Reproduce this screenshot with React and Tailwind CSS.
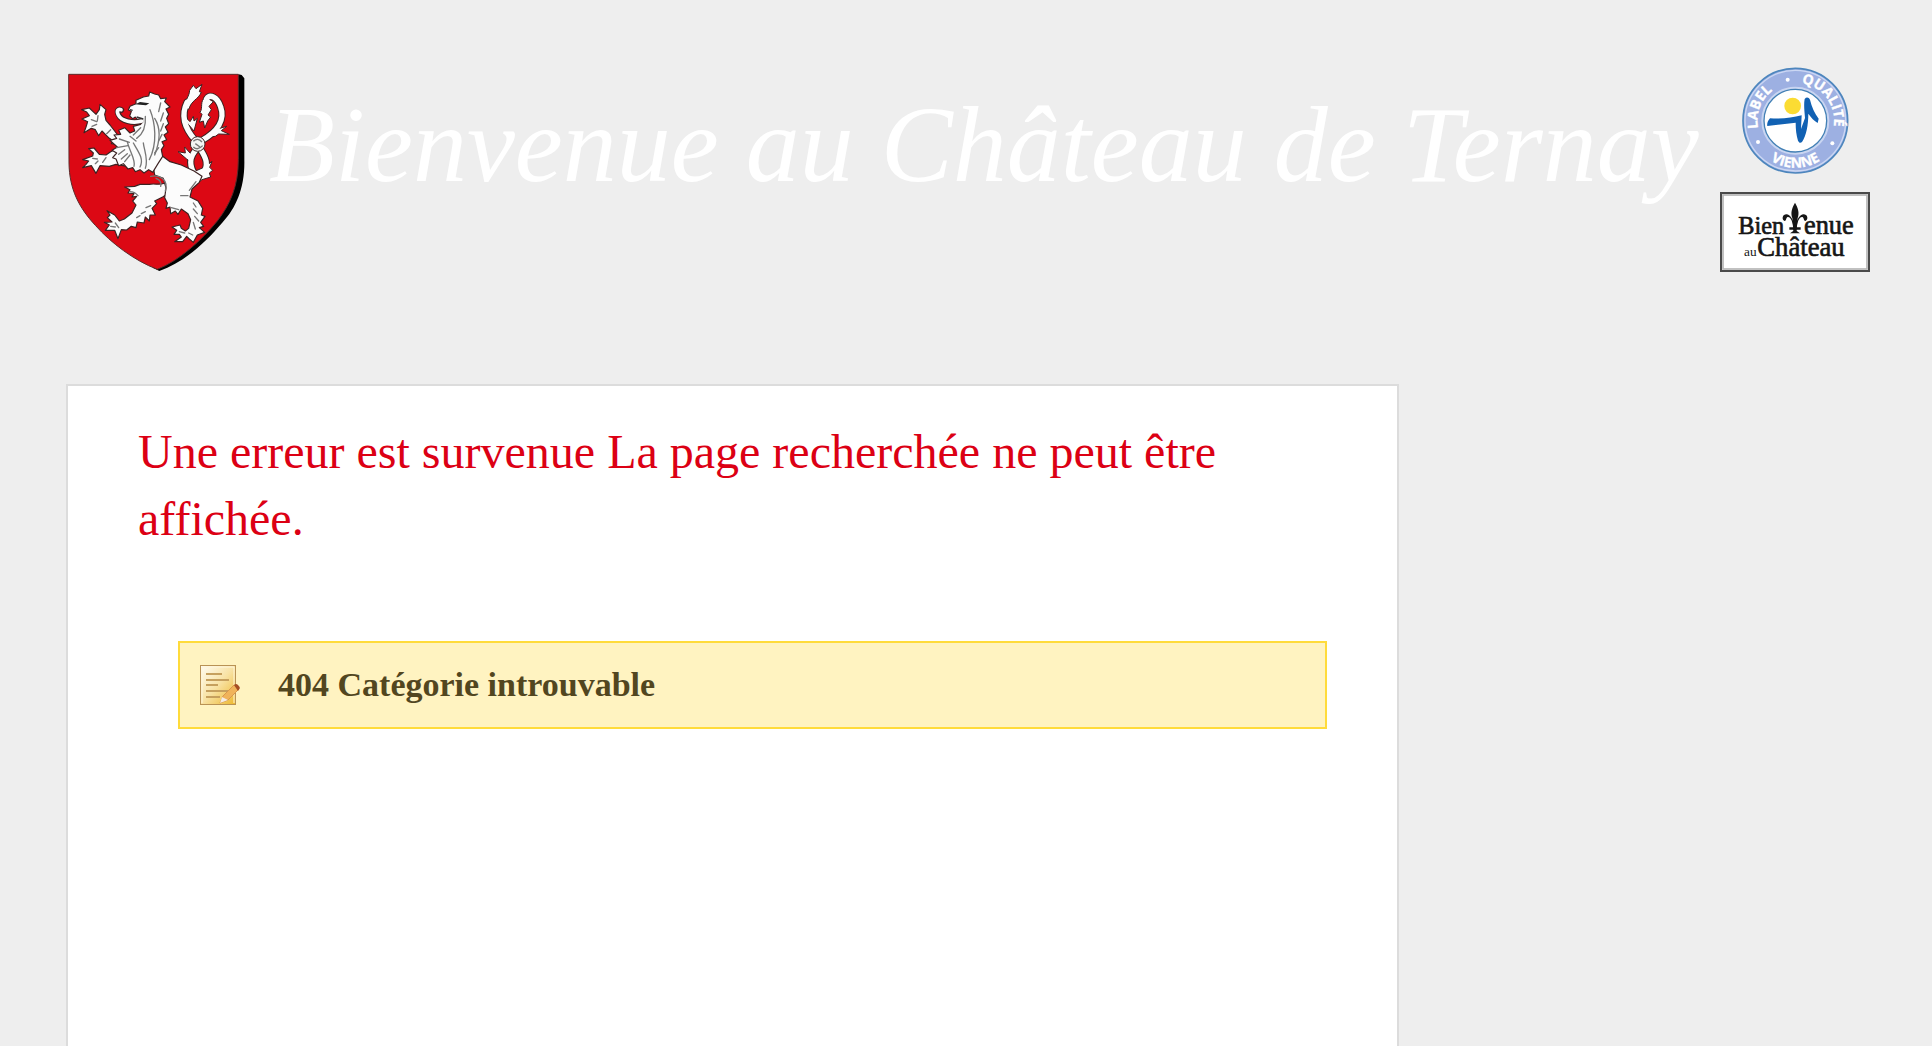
// Shield with the white lion
function CoatOfArms() {
    return (
        <svg viewBox="36 40 531 597" className="w-[177px] h-[199px] shrink-0" role="img" aria-label="Blason">
            <path d="M548 44L557 46L565 56V300C567 385 540 445 500 488C452 545 385 608 310 634L290 624Z" fill="#000" />
            <path
                d="M38 44H547V300C547 380 522 435 484 484C438 540 372 602 304 629C235 603 165 550 118 497C70 445 40 390 39 310Z"
                fill="#dc0814"
                stroke="#5b2a2a"
                strokeWidth="3"
            />
            {/* Tail */}
            <g fill="none" strokeLinecap="round" stroke="#3c2222" strokeWidth="22">
                <path d="M420 348C395 315 402 290 422 268M440 345C460 315 450 295 434 270" />
                <path d="M418 242C385 205 375 165 393 128M438 242C485 215 508 180 494 142C484 112 462 102 452 117" />
            </g>
            <g fill="#fcfcfc" stroke="#3c2222" strokeWidth="3" strokeLinejoin="round">
                <path d="M383 150C384 124 400 112 401 92L412 77L420 87L438 74L430 96L436 98C426 120 406 122 399 148Z" />
                <path d="M448 112C430 125 442 145 432 158L438 164L430 188L442 184L446 205L455 184L464 172L456 166L466 150L459 140L472 126Z" />
                <path d="M392 188L390 174L402 186L412 170L414 184L424 176L414 214Z" />
                <path d="M470 212L492 192L488 207L512 200L496 213L520 224L488 223L478 230L458 232Z" />
                <path d="M408 310L392 298L366 276L388 280L386 262L402 280L412 290Z" />
                <path d="M446 322L468 305L461 323L470 332L460 340L464 352L438 360L415 378L405 340Z" />
            </g>
            <g fill="none" stroke="#fcfcfc" strokeWidth="16" strokeLinecap="round">
                <path d="M420 350C395 315 402 290 422 268M440 345C460 315 450 295 434 270" />
                <path d="M418 242C385 205 375 165 393 128M438 242C485 215 508 180 494 142C484 112 462 102 452 117" />
            </g>
            <circle cx="425" cy="253" r="22" fill="#f4f4f4" stroke="#3c2222" strokeWidth="3" />
            <path d="M412 245Q425 232 438 247M412 262Q425 274 440 258M418 252L432 262" fill="none" stroke="#777" strokeWidth="4" />
            {/* Legs, body and head */}
            <g fill="#fcfcfc" stroke="#3c2222" strokeWidth="3.5" strokeLinejoin="round">
                <path d="M334 366C318 380 300 370 280 374L252 374L236 380L206 382L222 390L216 400L234 402L228 412L242 410L230 424L240 436L228 460L205 478L190 484L176 466L153 453L162 466L154 474L168 487L145 488L160 496L148 512L176 512L186 537L196 510L212 511L226 500L240 504L244 487L264 490L268 472L280 484L282 466L298 466L288 446L302 432L296 424L320 412L345 396Z" />
                <path d="M182 268L164 276L150 286L130 284L114 265L98 267L112 280L110 289L80 300L98 304L90 314L80 324L106 318L120 341L132 318L160 320L180 314L214 320L230 270Z" />
                <path d="M194 238L176 214L162 196L150 182L146 164L150 150L132 134L130 150L120 164L100 145L77 150L92 157L100 168L78 178L95 186L90 202L84 219L106 206L118 210L128 228L138 214L148 224L160 236L172 244L166 252L192 254Z" />
                <path d="M330 385L326 414L334 430L330 446L342 442L344 462L358 454L366 464L376 448L396 462L404 480L398 506L388 514L376 506L372 496L348 502L362 512L354 524L370 524L376 532L356 546L380 546L392 530L400 538L412 548L424 526L446 518L430 504L443 500L434 488L447 470L436 466L440 446L426 424L402 412L408 388L430 368L438 350L414 334L376 316L342 306L318 288L290 310L296 346L322 356Z" />
                <path d="M240 122L262 112L278 109L281 97L296 103L308 106L314 117L331 115L326 126L342 142L330 148L338 164L332 176L338 192L328 202L336 218L324 226L332 240L318 246L324 258L316 270L320 290L306 312L290 338L278 330L264 340L252 330L238 336L230 324L216 328L202 312L188 318L180 298L170 294L182 280L168 272L184 262L162 242L182 236L174 226L194 224L188 212L206 204L222 220L236 214L232 200L254 194L258 184L246 182L238 172L230 177L221 169L226 155L217 151L222 140L240 132Z" />
            </g>
            {/* Tongue */}
            <path d="M254 184C230 192 196 184 188 166C180 152 188 147 196 151" fill="none" stroke="#3c2222" strokeWidth="17" strokeLinecap="round" />
            <path d="M258 184C230 192 196 184 187 166C180 152 188 147 195 150" fill="none" stroke="#fcfcfc" strokeWidth="11" strokeLinecap="round" />
            {/* Fur and claws */}
            <g fill="none" stroke="#777" strokeWidth="4" strokeLinecap="round">
                <path d="M282 150C298 190 305 250 280 300M268 170C270 198 262 222 242 236M296 176C318 210 310 250 296 286" />
                <path d="M214 246C220 275 240 300 234 320M232 250C250 280 264 300 252 322M262 250C264 270 278 300 268 326" />
                <path d="M190 238L220 248M182 264L216 258M188 284L206 270M196 298L214 282M206 306L222 286M222 230L240 244" />
                <path d="M314 130L308 156M322 160L314 184M322 192L314 214M318 224L308 244M308 264L296 280M254 204L232 226" />
                <path d="M284 350C312 344 338 360 328 394M300 356Q318 362 314 380M246 408Q236 396 222 396" />
                <path d="M374 408H396M346 444L368 450M420 442L412 430M424 462L412 448M428 484L416 470M418 508L412 488" />
                <path d="M106 180L122 186M108 200L122 194M126 168L124 184M110 296L124 298M118 312L126 304M178 490L188 504M164 500L178 502M370 516L386 520M398 520L410 526" />
                <path d="M164 210L152 222M150 294L140 308M256 462L268 456M270 444L284 438M242 474L252 468M420 366L400 392" />
            </g>
            <path d="M238 134L252 127L280 131L270 137L252 135Z" fill="#222" />
            <path d="M222 150L230 152M242 172L262 178" stroke="#333" strokeWidth="4" />
        </svg>
    );
}

function LabelQualite() {
    return (
        <svg viewBox="125 52 321 321" className="w-[107px] h-[107px]" role="img" aria-label="Label Qualité Vienne">
            <defs>
                <path id="ring-label" d="M174 236A113 113 0 0 1 285 100A113 113 0 0 1 398 213" />
                <path id="ring-qualite" d="M303 101A113 113 0 0 1 285 326" />
                <path id="ring-vienne" d="M144 213A141 141 0 0 0 426 213" />
            </defs>
            <circle cx="285" cy="213" r="157" fill="#9db0e2" stroke="#4d86bd" strokeWidth="5" />
            <circle cx="285" cy="213" r="151" fill="none" stroke="#cbd7f3" strokeWidth="4" />
            <circle cx="285" cy="213" r="98" fill="#fff" stroke="#c9d5f1" strokeWidth="8" />
            <circle cx="285" cy="213" r="94" fill="#fff" stroke="#4380b5" strokeWidth="4" />
            <g fill="#fff" stroke="#fff" strokeWidth="1" fontFamily="'Open Sans', sans-serif" fontWeight="700" fontSize="42">
                <text><textPath href="#ring-label">LABEL</textPath></text>
                <text><textPath href="#ring-qualite">QUALITÉ</textPath></text>
                <text textAnchor="middle"><textPath href="#ring-vienne" startOffset="50%">VIENNE</textPath></text>
            </g>
            <g fill="#fff">
                <circle cx="262" cy="90" r="6" />
                <circle cx="173" cy="277" r="6" />
                <circle cx="396" cy="281" r="6" />
            </g>
            <circle cx="277" cy="169" r="25" fill="#fbdc33" />
            <path
                d="M209 206C245 208 275 205 304 197L302 238L314 205C312 180 310 165 313 148C318 142 325 142 329 150C334 172 343 190 355 207L352 220C342 214 332 204 324 192C324 225 318 258 305 277C300 281 296 279 293 273C288 255 286 240 286 219C258 222 228 226 201 229C199 222 203 213 209 206Z"
                fill="#1161b3"
            />
        </svg>
    );
}

function BienvenueChateau() {
    return (
        <svg viewBox="60 425 450 240" className="w-[150px] h-[80px]" role="img" aria-label="Bienvenue au Château">
            <rect x="63" y="428" width="444" height="234" fill="#fff" stroke="#4a4a4a" strokeWidth="6" />
            <rect x="69" y="434" width="432" height="222" fill="none" stroke="#b5b5b5" strokeWidth="5" />
            <g fill="#161616" stroke="#161616" strokeWidth="2" fontFamily="'Liberation Serif', serif">
                <text x="115" y="551" fontSize="73">Bien</text>
                <text x="312" y="551" fontSize="79">enue</text>
                <text x="172" y="617" fontSize="80">Château</text>
                <text x="132" y="617" fontSize="40" strokeWidth="0">au</text>
            </g>
            {/* Fleur-de-lis standing in for the V */}
            <g fill="#161616">
                <path d="M285 457C294 472 299 488 293 503L289 542H281L277 503C271 488 276 472 285 457Z" />
                <path d="M281 545C279 515 273 499 263 500C258 501 260 510 254 512C247 510 246 501 251 495C265 484 280 503 285 533C290 503 305 484 319 495C324 501 323 510 316 512C310 510 312 501 307 500C297 499 291 515 289 545Z" />
                <path d="M268 531H302V538H268ZM270 549L285 538L300 549Z" />
            </g>
        </svg>
    );
}

function NoteIcon() {
    return (
        <svg viewBox="0 0 40 40" className="w-10 h-10 shrink-0" aria-hidden="true">
            <defs>
                <linearGradient id="paper" x1="0" y1="0" x2="1" y2="1">
                    <stop offset="0" stopColor="#fffdf5" />
                    <stop offset="0.5" stopColor="#f8e2a4" />
                    <stop offset="1" stopColor="#edb72c" />
                </linearGradient>
            </defs>
            <rect x="0.5" y="0.5" width="35" height="39" fill="url(#paper)" stroke="#b99255" />
            <path d="M2 38V2H34V38" fill="none" stroke="#fff5d9" />
            <path d="M6 9H22M6 15H29M6 20H18M6 26H29M6 32H20" stroke="#c6a05e" strokeWidth="2" />
            <path d="M20 38L23 31L34 20L39 24L28 35Z" fill="#f0b35a" stroke="#d9974d" />
            <path d="M34 20Q37 17 40 23L38 26Z" fill="#a54e24" />
            <path d="M20 38L22 32L28 35Z" fill="#f5ece2" />
        </svg>
    );
}

export default function App() {
    return (
        <div className="min-h-screen flex flex-col bg-[#eeeeee]">
            {/* Header */}
            <header className="flex items-start justify-between pl-[68px] pr-[62px] pt-[67px] pb-28">
                <div className="flex items-start gap-6 pt-[6px]">
                    <CoatOfArms />
                    <h1 className="whitespace-nowrap font-['Gabriola','Liberation_Serif',serif] italic text-[108px] leading-[144px] text-white">
                        Bienvenue au Château de Ternay
                    </h1>
                </div>
                <div className="flex flex-col items-center gap-[18px]">
                    <LabelQualite />
                    <BienvenueChateau />
                </div>
            </header>

            {/* Content */}
            <main className="flex-1 w-[69%] ml-[66px] px-[70px] pt-8 bg-white border-2 border-b-0 border-[#dcdcdc]">
                <h2 className="font-['Times_New_Roman','Liberation_Serif',serif] text-[48px] leading-[67px] text-[#dc0014]">
                    Une erreur est survenue La page recherchée ne peut être affichée.
                </h2>
                <div className="flex items-center gap-[38px] mt-[89px] ml-10 px-5 h-[88px] bg-[#fff3c1] border-2 border-[#ffdb3b]" role="alert">
                    <NoteIcon />
                    <p className="font-['Georgia','Liberation_Serif',serif] font-bold text-[34px] leading-10 text-[#52461f]">
                        404 Catégorie introuvable
                    </p>
                </div>
            </main>
        </div>
    );
}
